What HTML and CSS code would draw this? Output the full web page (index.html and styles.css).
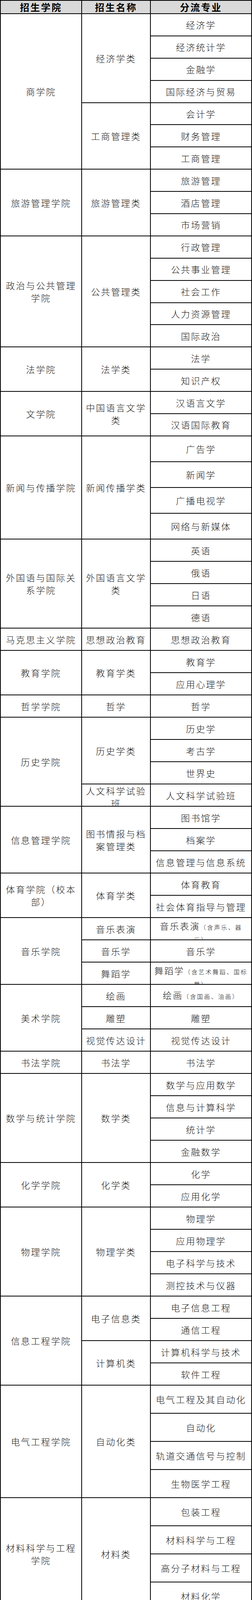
FILE: index.html
```html
<!DOCTYPE html>
<html lang="zh-CN">
<head>
<meta charset="utf-8">
<title>招生分流专业表</title>
<link rel="stylesheet" href="styles.css">
</head>
<body>
<div class="sheet">
  <div class="grid">
    <div class="cell head"><span>招生学院</span></div>
    <div class="cell head"><span>招生名称</span></div>
    <div class="cell head"><span>分流专业</span></div>

    <div class="cell s7"><span>商学院</span></div>
    <div class="cell s4"><span>经济学类</span></div>
    <div class="cell"><span>经济学</span></div>
    <div class="cell"><span>经济统计学</span></div>
    <div class="cell"><span>金融学</span></div>
    <div class="cell"><span>国际经济与贸易</span></div>
    <div class="cell s3"><span>工商管理类</span></div>
    <div class="cell"><span>会计学</span></div>
    <div class="cell"><span>财务管理</span></div>
    <div class="cell"><span>工商管理</span></div>

    <div class="cell s3"><span>旅游管理学院</span></div>
    <div class="cell s3"><span>旅游管理类</span></div>
    <div class="cell"><span>旅游管理</span></div>
    <div class="cell"><span>酒店管理</span></div>
    <div class="cell"><span>市场营销</span></div>

    <div class="cell s5"><span>政治与公共管理学院</span></div>
    <div class="cell s5"><span>公共管理类</span></div>
    <div class="cell"><span>行政管理</span></div>
    <div class="cell"><span>公共事业管理</span></div>
    <div class="cell"><span>社会工作</span></div>
    <div class="cell"><span>人力资源管理</span></div>
    <div class="cell"><span>国际政治</span></div>

    <div class="cell s2"><span>法学院</span></div>
    <div class="cell s2"><span>法学类</span></div>
    <div class="cell"><span>法学</span></div>
    <div class="cell"><span>知识产权</span></div>

    <div class="cell s2"><span>文学院</span></div>
    <div class="cell s2"><span>中国语言文学类</span></div>
    <div class="cell"><span>汉语言文学</span></div>
    <div class="cell"><span>汉语国际教育</span></div>

    <div class="cell s4"><span>新闻与传播学院</span></div>
    <div class="cell s4"><span>新闻传播学类</span></div>
    <div class="cell"><span>广告学</span></div>
    <div class="cell"><span>新闻学</span></div>
    <div class="cell"><span>广播电视学</span></div>
    <div class="cell"><span>网络与新媒体</span></div>

    <div class="cell s4"><span>外国语与国际关系学院</span></div>
    <div class="cell s4"><span>外国语言文学类</span></div>
    <div class="cell"><span>英语</span></div>
    <div class="cell"><span>俄语</span></div>
    <div class="cell"><span>日语</span></div>
    <div class="cell"><span>德语</span></div>

    <div class="cell"><span>马克思主义学院</span></div>
    <div class="cell"><span>思想政治教育</span></div>
    <div class="cell"><span>思想政治教育</span></div>

    <div class="cell s2"><span>教育学院</span></div>
    <div class="cell s2"><span>教育学类</span></div>
    <div class="cell"><span>教育学</span></div>
    <div class="cell"><span>应用心理学</span></div>

    <div class="cell"><span>哲学学院</span></div>
    <div class="cell"><span>哲学</span></div>
    <div class="cell"><span>哲学</span></div>

    <div class="cell s4"><span>历史学院</span></div>
    <div class="cell s3"><span>历史学类</span></div>
    <div class="cell"><span>历史学</span></div>
    <div class="cell"><span>考古学</span></div>
    <div class="cell"><span>世界史</span></div>
    <div class="cell clip"><span>人文科学试验<br>班</span></div>
    <div class="cell"><span>人文科学试验班</span></div>

    <div class="cell s3"><span>信息管理学院</span></div>
    <div class="cell s3"><span>图书情报与档案管理类</span></div>
    <div class="cell"><span>图书馆学</span></div>
    <div class="cell"><span>档案学</span></div>
    <div class="cell"><span>信息管理与信息系统</span></div>

    <div class="cell s2"><span>体育学院（校本部）</span></div>
    <div class="cell s2"><span>体育学类</span></div>
    <div class="cell"><span>体育教育</span></div>
    <div class="cell"><span>社会体育指导与管理</span></div>

    <div class="cell s3"><span>音乐学院</span></div>
    <div class="cell"><span>音乐表演</span></div>
    <div class="cell clip"><span class="mix">音乐表演<em class="sm">（含声乐、器<br>乐）</em></span></div>
    <div class="cell"><span>音乐学</span></div>
    <div class="cell"><span>音乐学</span></div>
    <div class="cell"><span>舞蹈学</span></div>
    <div class="cell clip"><span class="mix">舞蹈学<em class="sm">（含艺术舞蹈、国标<br>舞）</em></span></div>

    <div class="cell s3"><span>美术学院</span></div>
    <div class="cell"><span>绘画</span></div>
    <div class="cell"><span>绘画<em class="sm">（含国画、油画）</em></span></div>
    <div class="cell"><span>雕塑</span></div>
    <div class="cell"><span>雕塑</span></div>
    <div class="cell"><span>视觉传达设计</span></div>
    <div class="cell"><span>视觉传达设计</span></div>

    <div class="cell"><span>书法学院</span></div>
    <div class="cell"><span>书法学</span></div>
    <div class="cell"><span>书法学</span></div>

    <div class="cell s4"><span>数学与统计学院</span></div>
    <div class="cell s4"><span>数学类</span></div>
    <div class="cell"><span>数学与应用数学</span></div>
    <div class="cell"><span>信息与计算科学</span></div>
    <div class="cell"><span>统计学</span></div>
    <div class="cell"><span>金融数学</span></div>

    <div class="cell s2"><span>化学学院</span></div>
    <div class="cell s2"><span>化学类</span></div>
    <div class="cell"><span>化学</span></div>
    <div class="cell"><span>应用化学</span></div>

    <div class="cell s4"><span>物理学院</span></div>
    <div class="cell s4"><span>物理学类</span></div>
    <div class="cell"><span>物理学</span></div>
    <div class="cell"><span>应用物理学</span></div>
    <div class="cell"><span>电子科学与技术</span></div>
    <div class="cell"><span>测控技术与仪器</span></div>

    <div class="cell s4"><span>信息工程学院</span></div>
    <div class="cell s2"><span>电子信息类</span></div>
    <div class="cell"><span>电子信息工程</span></div>
    <div class="cell"><span>通信工程</span></div>
    <div class="cell s2"><span>计算机类</span></div>
    <div class="cell"><span>计算机科学与技术</span></div>
    <div class="cell"><span>软件工程</span></div>

    <div class="cell s4"><span>电气工程学院</span></div>
    <div class="cell s4"><span>自动化类</span></div>
    <div class="cell"><span>电气工程及其自动化</span></div>
    <div class="cell"><span>自动化</span></div>
    <div class="cell"><span>轨道交通信号与控制</span></div>
    <div class="cell"><span>生物医学工程</span></div>

    <div class="cell s4"><span>材料科学与工程学院</span></div>
    <div class="cell s4"><span>材料类</span></div>
    <div class="cell"><span>包装工程</span></div>
    <div class="cell"><span>材料科学与工程</span></div>
    <div class="cell"><span>高分子材料与工程</span></div>
    <div class="cell"><span>材料化学</span></div>

    <div class="cell s4"><span>机械与动力工程学院</span></div>
    <div class="cell s4"><span>机械类</span></div>
    <div class="cell"><span>工业设计</span></div>
    <div class="cell"><span>机械工程</span></div>
    <div class="cell"><span>过程装备与控制工程</span></div>
    <div class="cell"><span>能源与动力工程</span></div>

    <div class="cell s4"><span>土木工程学院</span></div>
    <div class="cell s4"><span>土木类</span></div>
    <div class="cell"><span>土木工程</span></div>
    <div class="cell clip"><span>建筑环境与能源应用<br>工程</span></div>
    <div class="cell"><span>城市地下空间工程</span></div>
    <div class="cell"><span>交通工程</span></div>

    <div class="cell s4"><span>水利科学与工程学院</span></div>
    <div class="cell s4"><span>水利类</span></div>
    <div class="cell"><span>水利水电工程</span></div>
    <div class="cell"><span>水文与水资源工程</span></div>
    <div class="cell"><span>给排水科学与工程</span></div>
    <div class="cell"><span>道路桥梁与渡河工程</span></div>

    <div class="cell s3"><span>化工学院</span></div>
    <div class="cell s3"><span>化工与制药类</span></div>
    <div class="cell"><span>化学工程与工艺</span></div>
    <div class="cell"><span>制药工程</span></div>
    <div class="cell"><span>冶金工程</span></div>

    <div class="cell s3"><span>建筑学院</span></div>
    <div class="cell s3"><span>建筑类</span></div>
    <div class="cell"><span>建筑学</span></div>
    <div class="cell"><span>城乡规划</span></div>
    <div class="cell"><span>风景园林</span></div>

    <div class="cell s4"><span>管理工程学院</span></div>
    <div class="cell s4"><span>管理科学与工程类</span></div>
    <div class="cell"><span>工程管理</span></div>
    <div class="cell"><span>物流管理</span></div>
    <div class="cell"><span>工业工程</span></div>
    <div class="cell"><span>电子商务</span></div>

    <div class="cell s4"><span>生命科学学院</span></div>
    <div class="cell s4"><span>生物科学类</span></div>
    <div class="cell"><span>生物工程</span></div>
    <div class="cell"><span>生物技术</span></div>
    <div class="cell"><span>生物信息学</span></div>
    <div class="cell"><span>植物科学与技术</span></div>

    <div class="cell s2"><span>力学与安全工程学院</span></div>
    <div class="cell s2"><span>力学类</span></div>
    <div class="cell"><span>安全工程</span></div>
    <div class="cell"><span>工程力学</span></div>

    <div class="cell s2"><span>生态与环境学院</span></div>
    <div class="cell s2"><span>环境科学与工程类</span></div>
    <div class="cell"><span>环境工程</span></div>
    <div class="cell"><span>环境科学</span></div>

    <div class="cell"><span>地球科学与技术学院</span></div>
    <div class="cell"><span>地理信息科学</span></div>
    <div class="cell"><span>地理信息科学</span></div>

    <div class="cell s10"><span>医学院</span></div>
    <div class="cell"><span>基础医学</span></div>
    <div class="cell"><span>基础医学</span></div>
    <div class="cell s4"><span>临床医学类</span></div>
    <div class="cell"><span>临床医学</span></div>
    <div class="cell"><span>医学影像学</span></div>
    <div class="cell"><span>麻醉学</span></div>
    <div class="cell"><span>儿科学</span></div>
    <div class="cell"><span>口腔医学</span></div>
    <div class="cell"><span>口腔医学</span></div>
    <div class="cell s3"><span>医学技术类</span></div>
    <div class="cell"><span>医学检验技术</span></div>
    <div class="cell"><span>医学影像技术</span></div>
    <div class="cell"><span>康复治疗学</span></div>
    <div class="cell"><span>护理学</span></div>
    <div class="cell"><span>护理学</span></div>

    <div class="cell"><span>公共卫生学院</span></div>
    <div class="cell"><span>预防医学</span></div>
    <div class="cell"><span>预防医学</span></div>

    <div class="cell s2"><span>药学院</span></div>
    <div class="cell s2"><span>药学类</span></div>
    <div class="cell"><span>药学</span></div>
    <div class="cell"><span>药物制剂</span></div>

    <div class="cell s2"><span>软件学院</span></div>
    <div class="cell"><span>信息安全</span></div>
    <div class="cell"><span>信息安全</span></div>
    <div class="cell"><span>物联网工程</span></div>
    <div class="cell"><span>物联网工程</span></div>

    <div class="cell tail"></div>
    <div class="cell tail"></div>
    <div class="cell tail"></div>
  </div>
  <div class="watermark">头条 @郑州大学</div>
</div>
</body>
</html>
```

FILE: styles.css
```css
html, body {
  margin: 0;
  padding: 0;
  background: #ffffff;
}

.sheet {
  position: relative;
  width: 645px;
  height: 6766px;
  overflow: hidden;
}

.grid {
  display: grid;
  grid-template-columns: 208px 176px 259px;
  grid-template-rows:
    34px
    repeat(19, 56.9px)
    repeat(4, 66.1px)
    repeat(38, 57px)
    repeat(8, 72px)
    repeat(12, 57px)
    repeat(10, 69px)
    repeat(8, 57px)
    72px
    repeat(15, 49px)
    5px;
  border-left: 2px solid #000;
  border-top: 2px solid #000;
  font-family: "Noto Sans CJK SC", "Noto Sans", sans-serif;
}

.cell {
  display: flex;
  box-sizing: border-box;
  min-width: 0;
  min-height: 0;
  padding: 0 8px;
  border-right: 2px solid #000;
  border-bottom: 2px solid #000;
}

.cell > span {
  margin: auto;
  text-align: center;
  font-size: 23px;
  font-weight: 300;
  letter-spacing: 2.7px;
  line-height: 32px;
  color: #1c1c1c;
}

.cell > span.mix {
  line-height: 28px;
  padding-top: 6px;
}

.clip {
  overflow: hidden;
}

.tail {
  border-bottom: none;
}

.head {
  background: #d9d9d9;
}

.head > span {
  font-size: 24px;
  font-weight: 700;
  letter-spacing: 3px;
  line-height: 30px;
  color: #000;
}

.sm {
  font-style: normal;
  font-size: 15px;
  letter-spacing: 3px;
}

.s2 { grid-row: span 2; }
.s3 { grid-row: span 3; }
.s4 { grid-row: span 4; }
.s5 { grid-row: span 5; }
.s7 { grid-row: span 7; }
.s10 { grid-row: span 10; }

.watermark {
  position: absolute;
  top: 6729px;
  left: 508px;
  font-family: "Noto Sans CJK SC", "Noto Sans", sans-serif;
  font-size: 18px;
  line-height: 22px;
  color: #3a3a3a;
  white-space: nowrap;
  text-shadow: 0 0 2px #fff, 0 0 1px #fff;
}
```
